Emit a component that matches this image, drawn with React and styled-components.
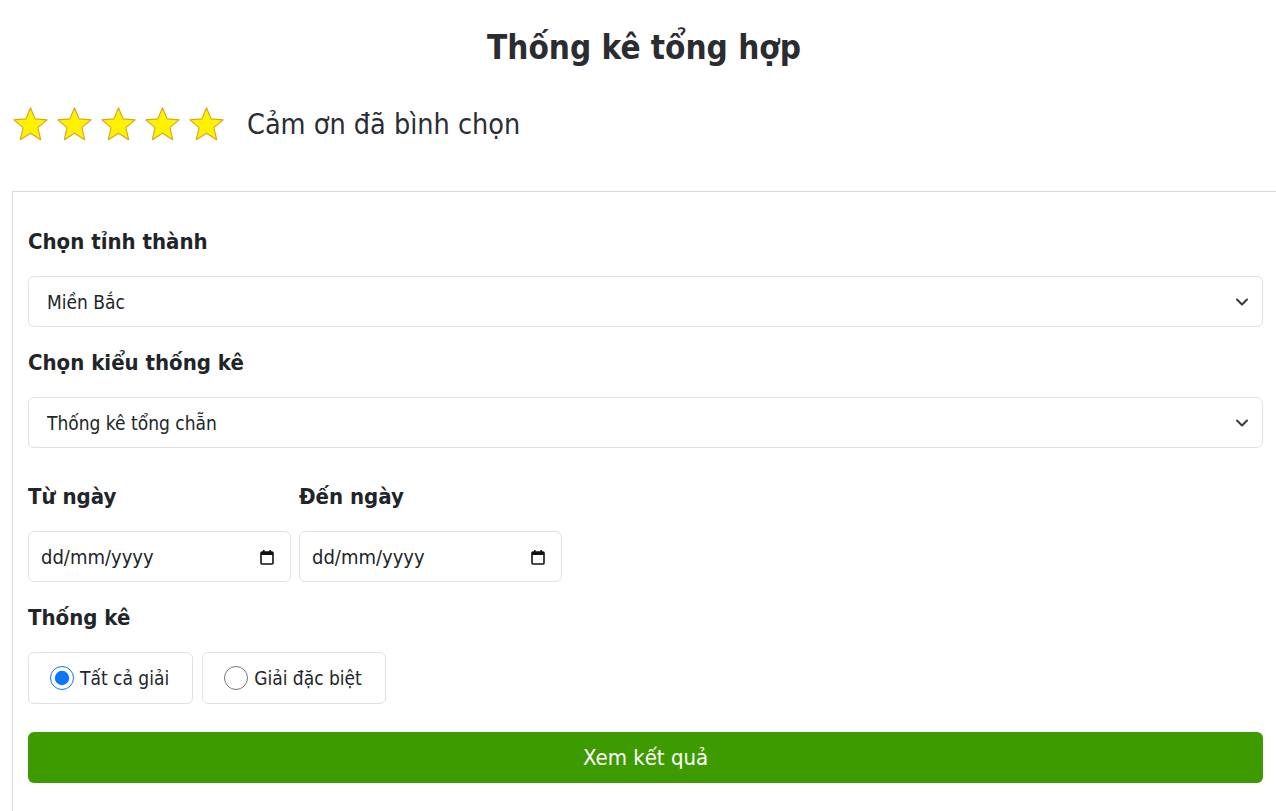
import React from 'react'
import styled, { createGlobalStyle } from 'styled-components'

const GlobalStyle = createGlobalStyle`
  html, body {
    margin: 0;
    padding: 0;
    background: #fff;
    overflow-x: hidden;
  }
  body {
    font-family: "DejaVu Sans Condensed", "DejaVu Sans", sans-serif;
    color: #212529;
  }
`

const Page = styled.div`
  padding: 0 0 0 12px;
`

const Title = styled.h1`
  margin: 0;
  padding: 28px 0 0;
  text-align: center;
  font-size: 33px;
  line-height: 40px;
  font-weight: bold;
  color: #2a2c31;
`

const RatingRow = styled.div`
  display: flex;
  align-items: center;
  margin-top: 36px;
  height: 40px;
`

const Stars = styled.div`
  display: flex;
  gap: 7px;
  margin-right: 22px;
`

const ThanksText = styled.span`
  font-size: 28.5px;
  color: #2b2d33;
`

const Card = styled.div`
  margin-top: 47px;
  margin-right: -3px;
  border-top: 1px solid #d9d9d9;
  border-left: 1px solid #d9d9d9;
  padding: 15px 16px 30px 15px;
`

const Label = styled.label`
  display: block;
  font-size: 22px;
  line-height: 30px;
  font-weight: bold;
  color: #212529;
  margin: ${(p) => (p.$first ? '20px' : '21px')} 0 19px;
`

const SelectWrap = styled.div`
  position: relative;
`

const Select = styled.select`
  appearance: none;
  width: 100%;
  height: 51px;
  box-sizing: border-box;
  border: 1px solid #dee2e6;
  border-radius: 6px;
  background: #fff;
  padding: 0 40px 0 18px;
  font-family: inherit;
  font-size: 19px;
  color: #212529;
`

const Chevron = styled.svg`
  position: absolute;
  right: 14px;
  top: 50%;
  margin-top: -6px;
  pointer-events: none;
`

const DateRow = styled.div`
  display: flex;
  gap: 8px;
  margin-top: 34px;
`

const DateCol = styled.div`
  width: 263px;
  & > label {
    margin-top: 0;
  }
`

const DateBox = styled.div`
  display: flex;
  align-items: center;
  justify-content: space-between;
  height: 51px;
  box-sizing: border-box;
  border: 1px solid #dee2e6;
  border-radius: 6px;
  padding: 0 16px 0 12px;
  font-size: 20px;
  color: #212529;
`

const RadioRow = styled.div`
  display: flex;
  gap: 9px;
`

const RadioBox = styled.label`
  display: flex;
  align-items: center;
  height: 52px;
  box-sizing: border-box;
  border: 1px solid #dee2e6;
  border-radius: 6px;
  padding: 0 23px 0 21px;
  font-size: 19px;
  color: #212529;
  cursor: pointer;
`

const Radio = styled.input`
  width: 24px;
  height: 24px;
  margin: 0 6px 0 0;
  accent-color: #0b75ff;
`

const SubmitButton = styled.button`
  display: block;
  width: 100%;
  height: 51px;
  margin-top: 28px;
  border: none;
  border-radius: 6px;
  background: #3d9b00;
  color: #fff;
  font-family: inherit;
  font-size: 22px;
  cursor: pointer;
`

function Star() {
  return (
    <svg width="37" height="36" viewBox="0 0 40 38">
      <polygon
        points="20,1.5 25,13.5 38,14.5 28,23 31,36 20,29 9,36 12,23 2,14.5 15,13.5"
        fill="#fff200"
        stroke="#d9a520"
        strokeWidth="1.2"
        strokeLinejoin="round"
      />
    </svg>
  )
}

function ChevronIcon() {
  return (
    <Chevron width="14" height="12" viewBox="0 0 14 12">
      <path d="M2 3.5 L7 8.5 L12 3.5" fill="none" stroke="#343a40" strokeWidth="2" strokeLinecap="round" strokeLinejoin="round" />
    </Chevron>
  )
}

function CalendarIcon() {
  return (
    <svg width="14" height="16" viewBox="0 0 14 16">
      <rect x="1" y="3" width="12" height="12" fill="none" stroke="#111" strokeWidth="1.6" rx="1" />
      <rect x="1" y="3" width="12" height="3" fill="#111" />
      <rect x="3" y="1" width="1.6" height="3" fill="#111" />
      <rect x="9.4" y="1" width="1.6" height="3" fill="#111" />
    </svg>
  )
}

function SelectField({ children }) {
  return (
    <SelectWrap>
      <Select>{children}</Select>
      <ChevronIcon />
    </SelectWrap>
  )
}

export default function App() {
  return (
    <>
      <GlobalStyle />
      <Page>
        <Title>Thống kê tổng hợp</Title>
        <RatingRow>
          <Stars>
            {[0, 1, 2, 3, 4].map((i) => (
              <Star key={i} />
            ))}
          </Stars>
          <ThanksText>Cảm ơn đã bình chọn</ThanksText>
        </RatingRow>
        <Card>
          <Label $first>Chọn tỉnh thành</Label>
          <SelectField>
            <option>Miền Bắc</option>
            <option>Miền Trung</option>
            <option>Miền Nam</option>
          </SelectField>
          <Label>Chọn kiểu thống kê</Label>
          <SelectField>
            <option>Thống kê tổng chẵn</option>
            <option>Thống kê tổng lẻ</option>
          </SelectField>
          <DateRow>
            <DateCol>
              <Label>Từ ngày</Label>
              <DateBox>
                <span>dd/mm/yyyy</span>
                <CalendarIcon />
              </DateBox>
            </DateCol>
            <DateCol>
              <Label>Đến ngày</Label>
              <DateBox>
                <span>dd/mm/yyyy</span>
                <CalendarIcon />
              </DateBox>
            </DateCol>
          </DateRow>
          <Label>Thống kê</Label>
          <RadioRow>
            <RadioBox>
              <Radio type="radio" name="loai" defaultChecked />
              Tất cả giải
            </RadioBox>
            <RadioBox>
              <Radio type="radio" name="loai" />
              Giải đặc biệt
            </RadioBox>
          </RadioRow>
          <SubmitButton>Xem kết quả</SubmitButton>
        </Card>
      </Page>
    </>
  )
}
